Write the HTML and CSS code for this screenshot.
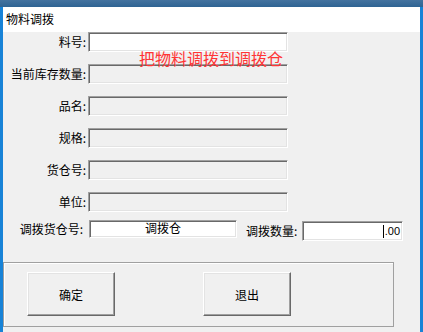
FILE: index.html
```html
<!DOCTYPE html>
<html>
<head>
<meta charset="utf-8">
<link rel="stylesheet" href="styles.css">
</head>
<body>
<div class="topbar"></div>
<div class="win">
  <div class="edge"></div>
  <div class="content">
    <div class="title">物料调拨</div>
    <div class="body">
      <div class="hint">把物料调拨到调拨仓</div>
      <div class="form">
        <div class="lbl">料号:</div><div class="field white"></div>
        <div class="lbl">当前库存数量:</div><div class="field"></div>
        <div class="lbl">品名:</div><div class="field"></div>
        <div class="lbl">规格:</div><div class="field"></div>
        <div class="lbl">货仓号:</div><div class="field"></div>
        <div class="lbl">单位:</div><div class="field"></div>
      </div>
      <div class="row7">
        <div class="lbl7">调拨货仓号:</div>
        <div class="field white wh">调拨仓</div>
        <div class="lbl8">调拨数量:</div>
        <div class="field white qty"><span class="caret"></span><span class="num">.00</span></div>
      </div>
      <div class="group">
        <div class="btn">确定</div>
        <div class="btn">退出</div>
      </div>
    </div>
  </div>
  <div class="edge right"></div>
</div>
</body>
</html>
```

FILE: styles.css
```css
html, body {
  margin: 0;
  padding: 0;
}
body {
  width: 423px;
  height: 332px;
  overflow: hidden;
  background: #f0f0f0;
  font-family: "Noto Sans CJK SC", "Noto Sans", sans-serif;
  font-size: 12px;
  color: #000;
}
.topbar {
  height: 7px;
  background: linear-gradient(#44739f, #2f6493);
}
.win {
  display: flex;
  height: 325px;
}
.edge {
  width: 3px;
  background: #1883d7;
}
.edge.right {
  width: 3px;
}
.content {
  width: 417px;
  display: flex;
  flex-direction: column;
  background: #f0f0f0;
}
.title {
  height: 25px;
  box-sizing: border-box;
  padding: 4px 0 0 3px;
  line-height: 15px;
  background: #fff;
  font-size: 12px;
}
.body {
  position: relative;
  height: 300px;
}
.hint {
  position: absolute;
  left: 136px;
  top: 18px;
  font-size: 16px;
  line-height: 16px;
  color: #ff3535;
  white-space: nowrap;
  z-index: 2;
}
.form {
  display: grid;
  grid-template-columns: 85px 200px;
  grid-auto-rows: 20px;
  row-gap: 12px;
}
.lbl {
  text-align: right;
  padding-right: 2px;
  line-height: 20px;
  white-space: nowrap;
}
.field {
  box-sizing: border-box;
  height: 20px;
  background: #f0f0f0;
  border: 1px solid;
  border-color: #a0a0a0 #fff #fff #a0a0a0;
  box-shadow: inset 1px 1px #696969, inset -1px -1px #e3e3e3;
}
.field.white {
  background: #fff;
}
.row7 {
  display: flex;
  align-items: flex-start;
  margin-top: 8px;
}
.lbl7 {
  width: 84px;
  box-sizing: border-box;
  padding-right: 4px;
  text-align: right;
  line-height: 18px;
  white-space: nowrap;
}
.wh {
  margin-left: 2px;
  width: 148px;
  height: 18px;
  text-align: center;
  line-height: 14px;
  padding-top: 0;
}
.lbl8 {
  margin-left: 9px;
  width: 56px;
  line-height: 20px;
  margin-top: 1px;
  white-space: nowrap;
}
.qty {
  width: 101px;
  margin-top: 1px;
  display: flex;
  justify-content: flex-end;
  align-items: center;
  padding-right: 2px;
}
.caret {
  width: 1px;
  height: 13px;
  background: #000;
  margin-right: 1px;
}
.num {
  font-family: "Liberation Sans", sans-serif;
  font-size: 11px;
  line-height: 14px;
}
.group {
  margin-top: 21px;
  width: 391px;
  height: 65px;
  box-sizing: border-box;
  border: 1px solid #a0a0a0;
  box-shadow: inset 1px 1px #fff;
  padding: 9px 0 0 23px;
  display: flex;
  align-items: flex-start;
  gap: 88px;
}
.btn {
  width: 88px;
  height: 44px;
  box-sizing: border-box;
  background: #f0f0f0;
  border: 1px solid;
  border-color: #fff #696969 #696969 #fff;
  box-shadow: inset -1px -1px #a0a0a0, inset 1px 1px #e3e3e3;
  display: flex;
  align-items: center;
  justify-content: center;
  font-size: 12px;
}
```
